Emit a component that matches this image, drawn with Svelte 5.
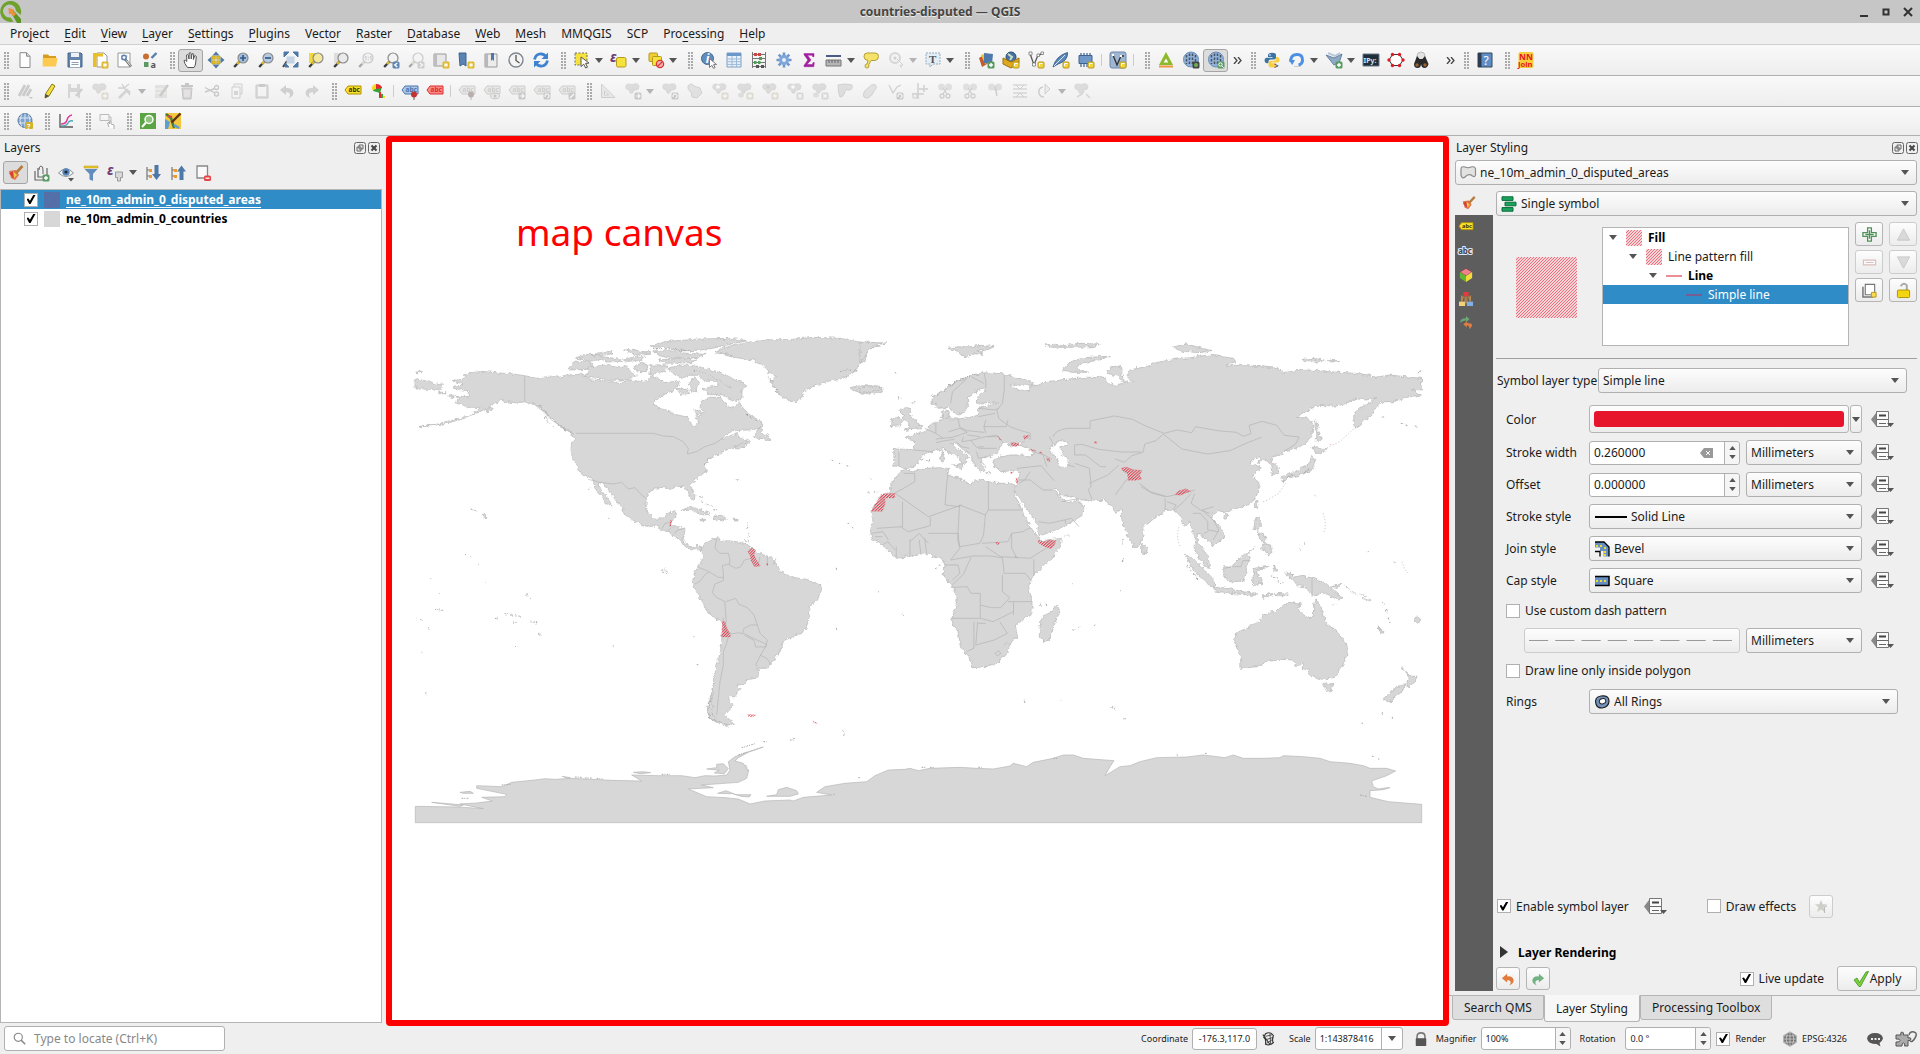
<script>
  // ---- icon fragments, all on a 16 x 16 grid ----
  const lens = (fill, inner = '') =>
    `<path d="M6.5 9.5 1.2 15" stroke="#3a3a3a" stroke-width="2.4"/><path d="M6.2 9.6 4 12" stroke="#e5c02c" stroke-width="2"/><circle cx="10" cy="6" r="5" fill="${fill}" stroke="#8b8b8b" stroke-width="1.2"/>${inner}`;
  const badge = (fill, inner) => `<rect x="9.5" y="9.5" width="7" height="7" rx="1.5" fill="${fill}"/>${inner}`;
  const plusB = badge('#5b9a62', '<path d="M13 11v4M11 13h4" stroke="#fff" stroke-width="1.4"/>');
  const starB = badge('#dcb628', '<path d="M13 10.6v4.8M10.8 11.8l4.4 2.4M15.2 11.8l-4.4 2.4" stroke="#fff"/>');
  const xB = badge('#b9a9a9', '<path d="m11.3 11.3 3.4 3.4m0-3.4-3.4 3.4" stroke="#fff" stroke-width="1.3"/>');
  const arrB = badge('#8d8d8d', '<path d="M10.8 13h4M13 11l2 2-2 2" stroke="#fff" stroke-width="1.2" fill="none"/>');
  const rotB = badge('#8d8d8d', '<path d="M11.3 14a2 2 0 1 1 2 1" stroke="#fff" stroke-width="1.2" fill="none"/>');
  const yelB = '<rect x="10" y="10" width="6" height="6" rx="1" fill="#f0d53c" stroke="#b8941c"/><path d="M11.5 14v-2.500h3" stroke="#fff" fill="none"/>';
  const leftB = badge('#5d86b4', '<path d="m14.300 11-2.500 2 2.500 2" stroke="#fff" stroke-width="1.400" fill="none"/>');
  const blob = '<path d="M.7 3.500Q1 .6 4 1q3 1 5 0 4.500-1 5 2.500 0 3.500-3.500 3.500-2.500 0-2.500 2.500-1 1.500-3 .3 0-3.300-2.500-3.300Q.7 6 .7 3.500z" fill="#b8b9b2" stroke="#9c9c98" stroke-width=".7"/>';
  const tag = (fill, stroke) =>
    `<path d="M0 7 3 3h13v8H3z" fill="${fill}" stroke="${stroke}"/><text x="3.500" y="9.300" font-size="6.500" font-weight="700" fill="${stroke === '#b19000' ? '#3d3300' : stroke}">abc</text>`;
  const pin = '<circle cx="12" cy="11.500" r="3" fill="#c43131"/><path d="M12 14v3" stroke="#5c5c5c"/>';
  const globe = '<circle cx="8" cy="7.500" r="7" fill="#7ea3cf" stroke="#56779f"/><path d="M1.500 5h13M1.500 10h13M8 .5v14M4.500 1.500q-3 6 0 12M11.500 1.500q3 6 0 12" stroke="#dfe8f2" fill="none"/>';
  const globeDark = '<circle cx="8" cy="7.500" r="7.500" fill="#8eb1da" stroke="#6a8fb8"/><path d="M3.500 3v9M6.500 1.500v12M9.500 1.500v12M12.500 3v9" stroke="#4b525c" stroke-width="1.500" stroke-dasharray="2.500 1.500"/>';
  const brush = '<path d="m1 6 7-1 3 5-4 5-4-2z" fill="#e3734a"/><path d="m1 8 5-2 2 4-3 3z" fill="#d63f3f"/><path d="m5 6 4 4-3 3z" fill="#f0cd3c"/><path d="m8 8 6.500-7" stroke="#b8793b" stroke-width="2.600"/>';
  const tree = '<path d="M2 2v13M2 5h5M2 11h5" stroke="#777" stroke-width="1.200" fill="none"/><path d="M4 4h3v3H4zM4 10h3v3H4z" fill="#eb9b32"/>';
  const scissors = '<circle cx="5" cy="13" r="2" fill="none" stroke="#999" stroke-width="1.300"/><circle cx="11" cy="13" r="2" fill="none" stroke="#999" stroke-width="1.300"/><path d="m6 11 4-6M10 11 6 5" stroke="#999" stroke-width="1.300"/>';
  const blobs = '<ellipse cx="4.500" cy="4" rx="3.500" ry="3.500" fill="#bfc0ba"/><ellipse cx="11.500" cy="4" rx="3.500" ry="3.500" fill="#bfc0ba"/>';

  const icons = {
    new: '<path d="M3 .7h6.500L13 4.200v11.300H3z" fill="#fdfdfd" stroke="#8a8a8a"/><path d="M9.500.7v3.500H13" fill="#ddd" stroke="#8a8a8a"/>',
    open: '<path d="M1 2.500h5L7.500 4H14v10H1z" fill="#d99c22"/><path d="M.7 6h14.800L14 14.500H.7z" fill="#fbca4f"/>',
    save: '<path d="M1 1h13l1 1v13H1z" fill="#6284ad" stroke="#48668c"/><path d="M4 1h8v4H4z" fill="#eef2f6"/><path d="M3 8h10v7H3z" fill="#fff"/><path d="M4.500 10.500h7M4.500 12.500h7" stroke="#8ca1b8"/>',
    layout: '<path d="M5 1h7l3 3v11H5z" fill="#fff" stroke="#999"/><path d="M1 1h3.500v14H1z" fill="#e9bf25"/><path d="M2 1.500h9v3H2z" fill="#e9bf25"/>' + starB,
    manager: '<path d="M1 1h12v14H1z" fill="#fff" stroke="#999"/><path d="M4 4h7M4 7h3" stroke="#ccc"/><path d="m8 7 6 7.500" stroke="#777" stroke-width="2.600"/><path d="m9.500 8.500 4 5" stroke="#f1f1f1"/><circle cx="7" cy="5.500" r="2.200" fill="none" stroke="#5d82b2" stroke-width="1.500"/>',
    style: '<circle cx="4" cy="4.500" r="3" fill="#c96d33"/><path d="M2 10h4.500v5H2z" fill="#5b9a62"/><path d="M9.500 6 14.500 1" stroke="#567fae" stroke-width="2.400"/><text x="8.500" y="15.500" font-size="9" font-weight="700" fill="#555">a</text>',
    hand: '<path d="M4.500 15.500Q1 11 1 8.500q1.500-1 2.800 1L3.600 3q1-1 1.700.2L6 7l.2-6q1.200-.8 1.800.3L8.200 7l.8-5.200q1.200-.7 1.700.4L10.400 7.500l1.300-3.700q1.200-.4 1.600.7L12.500 12q-.3 2-1.500 3.500z" fill="#fff" stroke="#555"/>',
    panto: '<path d="M8-.5l3.500 4h-7zM8 16.500l3.500-4h-7zM-.5 8l4-3.500v7zM16.500 8l-4-3.500v7z" fill="#4e78a8"/><path d="M4 4h3.300v3.300H4zM8.700 4H12v3.300H8.700zM4 8.700h3.300V12H4zM8.700 8.700H12V12H8.700z" fill="#e3c22b" stroke="#b1931a" stroke-width=".6"/>',
    zoomin: lens('#a9c0da', '<path d="M10 3v6M7 6h6" stroke="#315b8c" stroke-width="1.700"/>'),
    zoomout: lens('#b7cbe0', '<path d="M7 6h6" stroke="#315b8c" stroke-width="1.700"/>'),
    zoomfull: '<path d="M4 9 0 15" stroke="#444" stroke-width="2"/><path d="M3.500 4.500h8v7h-8z" fill="#c3d3e5"/><path d="M1 0h5L1 5zM15 0h-5l5 5zM2 15h4l-4-4zM15 15h-5l5-5z" fill="#4e78a8" stroke="#4e78a8"/>',
    zoomsel: '<path d="M1 1h6v10H1z" fill="#f1d83b"/>' + lens('#f3e79b'),
    zoomlayer: '<path d="M1 1h6v10H1z" fill="#ddd"/>' + lens('#eaeaea'),
    zoom11: lens('#eee', '<text x="6" y="8" font-size="6" font-weight="700" fill="#888">1:1</text>'),
    zoomlast: lens('#f3f3f3') + leftB,
    zoomnext: lens('#f3f3f3') + badge('#999', '<path d="m12 11 2.500 2-2.500 2" stroke="#fff" stroke-width="1.400" fill="none"/>'),
    mapview: '<path d="M1 2h12v12H1z" fill="#e8e8e8" stroke="#999"/><path d="M1 2h3v12H1z" fill="#bdbdbd"/>' + starB,
    book1: '<path d="M1 1h7v13l-3-2-3 2z" fill="#5b83b3" stroke="#40648f"/>' + starB,
    book2: '<path d="M2 2h12v13H2z" fill="#ececec" stroke="#999"/><path d="M2 2h3v13H2z" fill="#b8b8b8"/><path d="M8 1h3v8L9.500 7.500 8 9z" fill="#4e78a8"/>',
    clock: '<circle cx="8" cy="8" r="7" fill="#f4f4f4" stroke="#7d8690" stroke-width="1.400"/><path d="M8 3v5.500l3.500 2.500" stroke="#555" stroke-width="1.300" fill="none"/>',
    refresh: '<path d="M1.500 7.500Q3 1.500 8.500 2q2.500.2 4 2M14.500 8.500Q13 14.500 7.500 14q-2.500-.2-4-2" stroke="#3f82cf" stroke-width="2.800" fill="none"/><path d="M15 .5V7H8.500zM1 15.500V9h6.500z" fill="#3f82cf"/>',
    select: '<path d="M1 1h12v12H1z" fill="#f6e23f" stroke="#6b6b6b" stroke-dasharray="2 1.500"/><path d="m7 5 8 6-3.500.4 2 3.800-1.800.8-2-3.800L7 14.500z" fill="#fff" stroke="#555"/>',
    epsSel: '<text x="-1" y="9.500" font-size="14" font-weight="700" font-style="italic" fill="#6b3b70">ε</text><rect x="5.500" y="5.500" width="9.500" height="9.500" rx="1.500" fill="#f6e23f" stroke="#b59b1c"/>',
    desel: '<rect x="1" y="1" width="8.500" height="8.500" rx="1" fill="#f2cf39" stroke="#b59b1c"/><rect x="4.500" y="4.500" width="9" height="9" rx="1" fill="#f6e23f" stroke="#b59b1c"/><circle cx="12" cy="12" r="3.600" fill="#f4b1b1" stroke="#d63535" stroke-width="1.300"/><path d="m9.600 14.400 4.800-4.800" stroke="#d63535" stroke-width="1.300"/>',
    identify: '<circle cx="6.500" cy="6.500" r="6" fill="#628cbd" stroke="#45698f"/><text x="4.700" y="11" font-size="12" font-weight="700" font-style="italic" fill="#fff">i</text><path d="m8.500 6.500 7 6-3 .2 1.600 2.900-1.600.8-1.600-3-2.400 2z" fill="#fff" stroke="#777"/>',
    table: '<path d="M1 1h14v14H1z" fill="#eaf1f8" stroke="#7da0c4"/><path d="M1 1h14v3H1z" fill="#6b98c8"/><path d="M1 7h14M1 9.700h14M1 12.400h14M6 4v11M10.500 4v11" stroke="#9bb9d8"/>',
    abacus: '<path d="M1.500 0v16M14.500 0v16M1 2.500h14M1 6.500h14M1 10.500h14M1 14.500h14" stroke="#777"/><path d="M3 1h3v3H3zM7 1h3v3H7z" fill="#c64545"/><path d="M8 5h3v3H8z" fill="#4c9d55"/><path d="M3 9h2.500v3H3zM7 9h2.500v3H7z" fill="#4c9d55"/><path d="M5 13h3v3H5zM10 13h3v3h-3z" fill="#555"/>',
    gear: '<path d="M8 .5v15M.5 8h15M2.700 2.700l10.600 10.600M13.300 2.700 2.700 13.300" stroke="#6c96cc" stroke-width="2.600"/><circle cx="8" cy="8" r="5" fill="#7ea6da"/><circle cx="8" cy="8" r="2" fill="#e7eef8"/>',
    sigma: '<path d="M3 1.500h10v3.200h-1.300L11 3.200H6.500L10 8l-4 4.500h5.300l.8-2H13.300l-.5 4.200H3v-1.200L6.800 8 3 2.700z" fill="#a0209f" stroke="#a0209f" stroke-width=".5"/>',
    measure: '<path d="M0 4h15" stroke="#4a5a80" stroke-width="2"/><path d="M0 8h15v6H0z" fill="#b5b5b5" stroke="#777"/><path d="M3 8v3M6 8v3M9 8v3M12 8v3" stroke="#666"/>',
    tip: '<path d="M4 1h8q3.500 0 3.500 3.500T12 8.500H8L5.500 13l.5 1q0 2-2 2t-2-2 2-2l1-3.500Q1 8 1 4.500T4 1z" fill="#f4e26b" stroke="#b39f34"/>',
    action: '<circle cx="7" cy="6" r="5" fill="#eee" stroke="#aaa" stroke-width="2"/><circle cx="7" cy="6" r="1.500" fill="#999"/><path d="m9 7 6 6-3 .3 1.500 2.500" fill="#fff" stroke="#999"/>',
    textann: '<path d="M1 1h14v11H8l-3 3v-3H1z" fill="#e3edf6" stroke="#9ab" stroke-dasharray="2 1"/><text x="4" y="10.500" font-size="11" font-weight="700" fill="#555" font-family="Liberation Serif">T</text>',
    dsm: '<path d="m1 6 5-3 3 9-5 3z" fill="#c3592c"/><path d="m3 3 6-2 3 8-5 3z" fill="#edc42c"/><path d="m6 1 9 1-1 10-8-1z" fill="#4f79ac"/>' + plusB,
    geopkg: '<circle cx="8" cy="5" r="5" fill="#4573a7" stroke="#2b4b70"/><path d="M5 2l4 3-2 3" stroke="#cfe0c2" stroke-width="2" fill="none"/><path d="m0 6 8 4 8-4v5l-8 5-8-4z" fill="#e0a91c" stroke="#9a720d"/>' + yelB,
    shp: '<path d="M2 1.500 6 13 10 3l4-1" stroke="#555" fill="none" stroke-width="1.300"/><path d="M1 0h3v3H1zM4.500 11h3v3h-3zM9 2h2.500v2.500H9zM13 0h2.500v2.500H13z" fill="#fff" stroke="#777" stroke-width=".8"/>' + yelB,
    spatialite: '<path d="M0 15Q3 4 14.500.5 15 9 5 12z" fill="#5d88ba" stroke="#3d6290"/><path d="M1 14 12 3" stroke="#dbe6f2"/>' + yelB,
    memory: '<path d="M3 1v14M6 1v14M9 1v14M12 1v14" stroke="#3d6290" stroke-width="1.200"/><path d="M1 3.500h13v8H1z" fill="#6f98c8" stroke="#3d6290"/>' + yelB,
    virtual: '<rect x="0" y="0" width="16" height="16" rx="2" fill="#9fb6d2" stroke="#6c88aa"/><path d="M3 3l4 10 4-9h3" stroke="#333" stroke-width="1.300" fill="none"/><path d="M2 2h2v2H2zM10 3h2v2h-2z" fill="#fff"/>' + yelB,
    grass: '<path d="M8 0 1 13h14z" fill="#8bb92a"/><path d="m8 6.500-2.300 4h4.600z" fill="#fff"/><path d="M1 14.500h14" stroke="#ef9542" stroke-width="2"/>',
    globeA: globeDark + badge('#444', '<circle cx="13" cy="13" r="2" fill="#6fae55"/>'),
    globeB: globeDark + badge('#5b9a62', '<circle cx="12.500" cy="12.500" r="1.700" fill="none" stroke="#fff"/><path d="m13.700 13.700 2 2" stroke="#fff"/>'),
    python: '<path d="M8 .7q-4 0-4 2.500V5h4.500v.8H2.500Q.5 6 .5 8.500T3 11.300h1.500V9.500q0-2 2-2h3.500q2 0 2-2V3Q12 .7 8 .7z" fill="#3b73a5"/><path d="M8 15.500q4 0 4-2.500v-1.800H7.500v-.7h6q2 0 2-2.800T13.500 5H12v1.800q0 2-2 2H6.500q-2 0-2 2V13q0 2.500 3.500 2.500z" fill="#f7cf45"/><circle cx="6" cy="3" r=".8" fill="#fff"/><text x="10" y="17" font-size="8" font-weight="700" fill="#555">&gt;</text>',
    reload: '<path d="M2 10Q1 3 7.500 2.500T13.500 9q-.7 3.500-4 4" stroke="#4d8fe3" stroke-width="3" fill="none"/><path d="M0 8h6l-2.800 5z" fill="#4d8fe3"/><path d="M5 14.500h7" stroke="#ccc"/>',
    vecplus: '<path d="m0 3 8 3 8-4-3 9-5 2z" fill="#8ea9c4" stroke="#67829d"/><path d="m2 1 7 3 5-3" stroke="#b9c9da" stroke-width="2" fill="none"/>' + plusB,
    ipy: '<path d="M0 2h16v12H0z" fill="#1d2d3a" stroke="#6b7680"/><text x=".5" y="10.500" font-size="7" font-weight="700" fill="#d6e6ee">IPy:</text>',
    hex: '<path d="M4.500 2.500h7l3.500 5.500-3.500 5.500h-7L1 8z" fill="#fff" stroke="#333"/><circle cx="4.500" cy="2.500" r="1.700" fill="#e01b24"/><circle cx="11.500" cy="2.500" r="1.700" fill="#e01b24"/><circle cx="15" cy="8" r="1.700" fill="#e01b24"/><circle cx="1" cy="8" r="1.700" fill="#e01b24"/><circle cx="4.500" cy="13.500" r="1.700" fill="#e01b24"/><circle cx="11.500" cy="13.500" r="1.700" fill="#e01b24"/>',
    binoc: '<circle cx="8" cy="4" r="4" fill="#e3e3e3" stroke="#bbb"/><path d="M4 4 1 12q0 4 3.500 4T8 12q.5 4 3.500 4t4-4L12 4 9.500 7h-3z" fill="#2a2a2a"/><circle cx="4" cy="13" r="1.700" fill="#9a6230"/><circle cx="12" cy="13" r="1.700" fill="#9a6230"/>',
    help: '<path d="M1 1h14v14H1z" fill="#5f8ec6" stroke="#34465c"/><path d="M1 1h3.500v14H1z" fill="#2e3c50"/><text x="6.500" y="12.500" font-size="12" fill="#fff">?</text>',
    nn: '<rect x=".5" y="0" width="15" height="16" rx="2" fill="#f6cd3c"/><text x="1" y="7.500" font-size="8.500" font-weight="700" fill="#e8141c">NN</text><text x="0" y="14.500" font-size="7.500" font-weight="700" fill="#e8141c">Join</text>',
    pencils: '<path d="M2 13 8 2M6 13l6-11M10 13l4-7" stroke="#9b9089" stroke-width="2.800"/><path d="M12 14h4l-2 2z" fill="#888"/>',
    pencil: '<path d="m3 15 .5-4L10 1l3 2L7 13z" fill="#f4df3e" stroke="#8a7b20"/><path d="m3 15 .5-4L7 13z" fill="#4a4a4a"/>',
    saveedit: '<path d="M1 1h12v14H1z" fill="#a9a9a9"/><path d="M4 1h6v4H4zM3 9h8v6H3z" fill="#f0f0f0"/><path d="m9 13 6-7" stroke="#999" stroke-width="2.500"/>',
    addpoly: blob + starB,
    vertex: '<path d="M1 5h6l5-4M5 1l3 5 5 6" stroke="#999" fill="none" stroke-width="1.300"/><path d="m2 15 8-8 3 3" stroke="#a5a5a5" stroke-width="2.600" fill="none"/>',
    multiedit: '<path d="M1 2h12v13H1z" fill="#c9c9b5"/><path d="M1 6h12M1 10h12" stroke="#f2f2f2"/><path d="m6 13 8-11" stroke="#8f8f8f" stroke-width="2.400"/>',
    trash: '<path d="M3 5h10l-1 11H4z" fill="#c0a4a4" stroke="#957b7b"/><path d="M2 3h12M6 1h4" stroke="#957b7b" stroke-width="2"/><path d="M6 7v7M8 7v7M10 7v7" stroke="#eee"/>',
    cut: '<circle cx="12.500" cy="4.500" r="2" fill="none" stroke="#888" stroke-width="1.300"/><circle cx="12.500" cy="11" r="2" fill="none" stroke="#888" stroke-width="1.300"/><path d="M11 10 1 4.500M11 5.500 1 9" stroke="#888" stroke-width="1.400"/>',
    copy: '<path d="M5 1h8v10H5z" fill="#eee" stroke="#999"/><path d="M3 4h8v11H3z" fill="#f7f7f7" stroke="#999"/><path d="M5 8h4v4H5z" fill="#aaa"/>',
    paste: '<path d="M2 2h12v13H2z" fill="#bbb" stroke="#8c8c8c"/><path d="M4 4h8v9H4z" fill="#f5f5f5"/><path d="M5 1h6v3H5z" fill="#8c8c8c"/>',
    undo: '<path d="M1 7 7 2v3q7-.5 7.500 5-.5 4-5 5 2-2 1.500-4Q10 9 7 9v3z" fill="#a39a94"/>',
    redo: '<path d="M15 7 9 2v3Q2 4.500 1.500 10q.5 4 5 5-2-2-1.500-4Q6 9 9 9v3z" fill="#98a39a"/>',
    labYellow: tag('#f9e12f', '#b19000'),
    diagram: '<path d="m6 1 6 3-2 6-7-2z" fill="#37a23b"/><path d="M6 1q5 0 6 4l-6 1z" fill="#e42b2b"/><path d="M6 1Q1 2 2 7l4-1z" fill="#f2da25"/><path d="M9 9h2v6H9z" fill="#e42b2b"/><path d="M11 11h2v4h-2z" fill="#37a23b"/><path d="M13 13h2v2h-2z" fill="#f2da25"/>',
    labPin: tag('#a9c8ec', '#4c74a6') + pin,
    labRed: tag('#fb8a8a', '#e02b2b'),
    labG1: tag('#d5d3c8', '#98968c') + pin,
    labG2: tag('#d5d3c8', '#98968c') + '<ellipse cx="11" cy="13" rx="4.500" ry="2.800" fill="#ddd" stroke="#888"/><circle cx="11" cy="13" r="1.500" fill="#888"/>',
    labG3: tag('#d5d3c8', '#98968c') + arrB,
    labG4: tag('#d5d3c8', '#98968c') + rotB,
    labG5: tag('#d5d3c8', '#98968c') + badge('#8d8d8d', '<path d="m11 15 4-4" stroke="#fff" stroke-width="1.500"/>'),
    cad: '<path d="M1.500 1v13.500H15z" fill="#ddd5cc" stroke="#999"/><path d="M4.500 8v4h4z" fill="#f7f7f7" stroke="#999"/>',
    move: blob + arrB, rotate: blob + rotB,
    simplify: '<path d="M1 3q3-4 6 0l6 2 2 5-5 5-5-1-1-5q-4-2-3-6z" fill="#c6c7c1" stroke="#9c9c98"/>',
    ring: blob + '<circle cx="6" cy="4" r="1.800" fill="#fff"/>' + starB,
    part: blob + '<ellipse cx="4" cy="12" rx="3" ry="2.500" fill="#bfc0ba"/>' + starB,
    fill: blob + '<circle cx="6" cy="4" r="1.800" fill="#999"/>' + starB,
    delring: blob + '<circle cx="6" cy="4" r="1.800" fill="#fff"/>' + xB,
    delpart: blob + '<ellipse cx="4" cy="12" rx="3" ry="2.500" fill="#bfc0ba"/>' + xB,
    reshape: '<path d="M1 2q7-2 14 0 1 5-3 5-3-1-4 1-1 6-5 6-2-5-2-12z" fill="#bdbeb8" stroke="#999"/>',
    offset: '<path d="M2 14q-2-5 4-9 3-4 7-3.500 3 3-1 6.500-2 5-6 7-3 0-4-1z" fill="#c7c8c2" stroke="#999"/>',
    vtx2: '<path d="m2 2 4 8 4-6 4-2" stroke="#999" fill="none" stroke-width="1.300"/>' + rotB,
    trim: '<path d="M6 0v16M0 11h12M12 2v7M7 6h9" stroke="#999" stroke-width="1.500"/><path d="M1 11h4v4H1z" fill="#eee" stroke="#999"/>',
    split: blobs + scissors,
    merge: blobs + '<path d="m8 3 2 10M10 8l-3-2" stroke="#999" stroke-width="1.500"/>',
    align: '<path d="M1 2h14M1 6h14M1 10h14M1 14h14" stroke="#aaa" stroke-width="1.300"/><path d="m4 2 4 4 4-4M4 14l4-4 4 4" stroke="#999" fill="none"/>',
    rotpt: '<path d="M8 1v10l5-5z" fill="#ddd" stroke="#999"/><path d="M6 4Q1 5 2 10q1 4 5 4" stroke="#999" stroke-width="1.500" fill="none"/>',
    offpt: blob + '<path d="m3 14 5-3 2-3M12 11l4 4" stroke="#aaa" stroke-width="1.500" fill="none"/>',
    qms: globe + '<rect x="8" y="9" width="8" height="7" rx="1" fill="#d2b22d"/><text x="10" y="15.500" font-size="7" font-weight="700" fill="#fff">?</text>',
    profile: '<path d="M2 1v13h13" stroke="#555" fill="none" stroke-width="1.300"/><path d="M3 11q5 0 6-4t5-5" stroke="#e23c9a" stroke-width="1.500" fill="none"/><path d="M3 13q6 0 7-3t5-2" stroke="#4aa9b8" stroke-width="1.300" fill="none"/>',
    rectsel: '<path d="M1 1.500h9v6H1zM10 4h2v4" fill="none" stroke="#bbb"/><path d="m10 14-1.500-4 1-.5 1 1.500V8H12v3l3 1v4" fill="#fff" stroke="#aaa"/>',
    greensearch: '<path d="M0 0h16v16H0z" fill="#5aa444"/><circle cx="9" cy="6.500" r="4" fill="#8cc479" stroke="#fff" stroke-width="1.500"/><path d="m6 9.500-4 4.500" stroke="#fff" stroke-width="2"/>',
    osm: '<path d="M0 0h16v16H0z" fill="#f2c63d"/><path d="m0 6 5 3-2 7H0z" fill="#5d9ed2"/><path d="M1 1l5 4 3 10" stroke="#487f3a" stroke-width="2.500" fill="none"/><path d="m15.500.5-9 9" stroke="#5d3314" stroke-width="2.400"/><path d="m9 12 5 3" stroke="#5d9ed2" stroke-width="2.500"/><path d="m3 3 4 1" stroke="#d14545" stroke-width="2"/>',
    brush,
    addgroup: '<path d="M2 6v9h9M5 3v9h9V3" fill="none" stroke="#666" stroke-width="1.200"/><path d="M6 5q0-4 2-4t2 4v4" fill="none" stroke="#666"/>' + plusB,
    eye: '<path d="M.5 8Q8-.5 15.500 8 8 15 .5 8z" fill="#f2f4f6" stroke="#8a949e"/><circle cx="8" cy="7" r="3.700" fill="#5c86b7"/><circle cx="8" cy="7" r="1.600" fill="#1d2c3d"/><path d="M10 13h6l-3 3.500z" fill="#555"/>',
    filter: '<path d="M1 1h14v2H1z" fill="#ecc92d" stroke="#b7971b" stroke-width=".5"/><path d="M1.500 4h13L10 9v7l-3.500-1.500V9z" fill="#628cbd"/>',
    epsFil: '<text x="-1" y="10" font-size="14" font-weight="700" font-style="italic" fill="#6b3b70">ε</text><path d="M7.500 7h7v5.500h-2V16h-3v-3.500h-2z" fill="#d9d9d9" stroke="#999"/>',
    expand: tree + '<path d="M9.500 0h4v9H16l-4.500 6L7 9h2.500z" fill="#4e78a8"/>',
    collapse: tree + '<path d="M9.500 15h4V6.500H16L11.500.5 7 6.500h2.500z" fill="#4e78a8"/>',
    remove: '<path d="M2 1h10.500v12H2z" fill="#fafafa" stroke="#888" stroke-width="1.300"/><rect x="9" y="10.500" width="7" height="5.500" rx="1.500" fill="#e54545"/><path d="M10.500 13.200h4" stroke="#fff" stroke-width="1.300"/>',
    poly: '<path d="M1 4q0-3 4-2 3 1.500 6 0 4-1 4.500 2v6q-.5 2.500-3 1-4-3-7.500 1Q2 14.500 1 10z" fill="#e2e2e0" stroke="#8a8a8a" stroke-width="1.200"/>',
    single: '<path d="M1 .8h11v3.600H1zM4 6.200h11v3.600H4zM1 11.600h11v3.600H1z" fill="#19a45c" stroke="#0a6b39"/>',
    abcMask: '<text x="-1" y="11" font-size="9" font-weight="700" fill="#444" stroke="#dfe6ff" stroke-width="2.500" paint-order="stroke">abc</text>',
    cube: '<path d="m8 .5 7 4-7 4.500-7-4.500z" fill="#f1828a" stroke="#7b3035" stroke-width=".6"/><path d="m1 4.500 7 4.500v7l-7-4.500z" fill="#5eb832"/><path d="m15 4.500-7 4.500v7l7-4.500z" fill="#f3dc38"/>',
    joins: '<path d="M5 0h6v5H5z" fill="#e03c3c"/><path d="M3 4v7M5 5 3 11M11 5l2 6M13 4v7M7 5v8M9 5v8" stroke="#b8874c" stroke-width="1.500"/><path d="M0 11h7v5H0z" fill="#f1d27a"/><path d="M9 11h7v5H9z" fill="#82aee6"/>',
    history: '<path d="m8 0 4 3.500L8 7V5Q3 5 1.500 8 .5 2.500 8 2.500z" fill="#6aa877"/><path d="m9 6-4 3.500L9 13v-2.500q3 0 3 4.500 7-7-3-7z" fill="#df7d42"/>',
    green: '<path d="M6 1h4v5h5v4h-5v5H6v-5H1V6h5z" fill="#fff" stroke="#4d9157" stroke-width="1.400"/><path d="M8 3.500v9M3.500 8h9" stroke="#4d9157" stroke-width="1.500"/>',
    minus: '<path d="M1.500 5.500h13v5h-13z" fill="#fff" stroke="#c99" stroke-width="1.200"/><path d="M4 8h8" stroke="#c99"/>',
    up: '<path d="m8 2 6.500 12h-13z" fill="#c9c9c9" stroke="#aaa"/>',
    down: '<path d="m8 14 6.500-12h-13z" fill="#c9c9c9" stroke="#aaa"/>',
    dup: '<path d="M1 4v11h11" fill="none" stroke="#777" stroke-width="1.600"/><path d="M3.500 1.500h10v11h-10z" fill="#fff" stroke="#777" stroke-width="1.200"/><path d="M10 10h5v5h-5z" fill="#f6dd4f" stroke="#b8941c"/>',
    unlock: '<path d="M5 3.500Q8-1.500 11.500 2.500v5" fill="none" stroke="#aaa" stroke-width="2.200"/><rect x="1.500" y="7.500" width="13" height="8" rx="1" fill="#f3d511" stroke="#a89206"/>',
    undoC: '<path d="M1 7 7 2v3q7-.5 7.500 5-.5 4-5 5 2-2 1.500-4Q10 9 7 9v3z" fill="#e07b3d"/>',
    redoC: '<path d="M15 7 9 2v3Q2 4.500 1.500 10q.5 4 5 5-2-2-1.500-4Q6 9 9 9v3z" fill="#74b183"/>',
    check: '<path d="m1 9 3-2 2.500 4.500L13 1l2.500-.5L7.500 15.500H6z" fill="#7ed03a" stroke="#3f9124" stroke-width=".8"/>',
    star: '<path d="m8 1 2 5h5l-4 3.500 1.500 5.500L8 12l-4.500 3L5 9.500 1 6h5z" fill="#cfcfca"/><path d="M12 16V9l3-1" stroke="#b5b5b5" fill="none"/>',
    bevel: '<path d="M1 1h9l5 5v9.500H9.500V10H6V6.500H1z" fill="#668fc4"/><path d="M1 1h9l5 5v9.500M6 15.500V10.500H1" fill="none" stroke="#000" stroke-width="1.300"/><path d="M2 4h2v2H2zM6 4h2v2H6zM10 6h2v2h-2zM10 10h2v2h-2zM10 13h2v2h-2z" fill="#f0dc2c"/>',
    square: '<path d="M1 3.500h14v9H1" fill="#668fc4" stroke="#000" stroke-width="1.500"/><path d="M2 7h2v2H2zM6 7h2v2H6zM10 7h2v2h-2z" fill="#f0dc2c"/>',
    rings: '<path d="M2 10Q0 3 7 2q8-1 8 5 0 6-7 7-5 0-6-4z" fill="#7393bb" stroke="#222" stroke-width="1.200"/><ellipse cx="8.700" cy="7.500" rx="3.300" ry="2.600" fill="#fff" stroke="#222" transform="rotate(-15 8 8)"/>',
    search: '<circle cx="6.500" cy="6.500" r="5" fill="none" stroke="#888" stroke-width="1.400"/><path d="m10 10 5 5" stroke="#888" stroke-width="1.800"/>',
    extents: '<path d="m1 3 8 11M4 2q5-3 9 2-2 6 0 8-4 4-9 2 1-6-2-8z" fill="none" stroke="#333" stroke-width="1.300"/><path d="m4 5 8-2M4 9l9-3M5 13l8-5M9 2l1 12" stroke="#444"/>',
    lock: '<path d="M3.500 8V5q0-4 4.500-4t4.500 4v3" fill="none" stroke="#777" stroke-width="1.800"/><rect x="2" y="7" width="12" height="9" rx="1" fill="#555"/>',
    crs: '<path d="m8-1 8 5v8l-8 5-8-5V4z" fill="#b5b5b5"/><circle cx="8" cy="8" r="7" fill="#707070"/><path d="M1 8h14M2.500 4.500h11M2.500 11.500h11M8 1v14M5 2q-3 6 0 12M11 2q3 6 0 12" stroke="#dcdcdc" fill="none" stroke-width=".8"/>',
    bubble: '<path d="M0 7.500Q1 2 8 2t8 5.500q-1 3-3.500 4.500l1 3.500-4-2.500Q1 13 0 7.500z" fill="#555"/><path d="M4 7h2v2H4zM7.500 7h2v2h-2zM11 7h2v2h-2z" fill="#eee"/>',
    puzzle: '<path d="M-2 4h5q-1-3 1-3t1.500 3H10v3q3-1 3 1t-3 1.500V15H6.500q1-3-1-3T4 15h-6v-4q4 .5 4-1.500T-2 8z" fill="#aaa" stroke="#555"/><path d="M11 4q1-4 5-3t1 6-5 3" fill="none" stroke="#666" stroke-width="1.500"/>'
  };

  // Toolbar notation: "|" handle, ":" separator, ">>" overflow, "-" spacer,
  // "~name" disabled, "*name" pressed, "name+" button with a menu arrow.
  const toolbars = [
    '| new open save layout manager style | *hand panto zoomin zoomout zoomfull zoomsel zoomlayer ~zoom11 zoomlast ~zoomnext mapview book1 book2 clock refresh | select+ epsSel+ desel+ | identify table abacus gear sigma measure+ tip ~action+ textann+ | dsm geopkg shp spatialite memory : virtual : | grass globeA *globeB >> | python reload+ vecplus+ ipy hex binoc - >> | help | nn',
    '| ~pencils pencil ~saveedit ~addpoly ~vertex+ ~multiedit ~trash ~cut ~copy ~paste ~undo ~redo | labYellow diagram : labPin labRed : ~labG1 ~labG2 ~labG3 ~labG4 ~labG5 | ~cad ~move+ ~rotate ~simplify ~ring ~part ~fill ~delring ~delpart ~reshape ~offset ~vtx2 ~trim ~split ~split ~merge ~align ~rotpt+ ~offpt',
    '| qms | profile | rectsel | greensearch osm'
  ].map((row) => row.split(' ').map(parse));

  function parse(token) {
    if (token === '|') return { kind: 'grip' };
    if (token === ':') return { kind: 'sep' };
    if (token === '>>') return { kind: 'more' };
    if (token === '-') return { kind: 'space' };
    return {
      kind: 'btn',
      off: token.startsWith('~'),
      on: token.startsWith('*'),
      menu: token.endsWith('+'),
      name: token.replace(/[~*+]/g, '')
    };
  }

  const layerTools = '*brush addgroup eye filter epsFil+ expand collapse remove'.split(' ').map(parse);

  // Menu titles with the index of the underlined letter.
  const menus = [
    ['Project', 3], ['Edit', 0], ['View', 0], ['Layer', 0], ['Settings', 0], ['Plugins', 0], ['Vector', 4],
    ['Raster', 0], ['Database', 0], ['Web', 0], ['Mesh', 0], ['MMQGIS', -1], ['SCP', -1], ['Processing', 3], ['Help', 0]
  ].map(([t, i]) => (i < 0 ? [t, '', ''] : [t.slice(0, i), t[i], t.slice(i + 1)]));

  let layers = $state([
    { name: 'ne_10m_admin_0_disputed_areas', on: true, selected: true },
    { name: 'ne_10m_admin_0_countries', on: true, selected: false }
  ]);

  const symbolTree = [
    { name: 'Fill', depth: 0, swatch: 'hatch', bold: true },
    { name: 'Line pattern fill', depth: 1, swatch: 'hatch' },
    { name: 'Line', depth: 2, swatch: 'dash', bold: true },
    { name: 'Simple line', depth: 3, swatch: 'dash', selected: true }
  ];

  const sideTabs = ['labYellow', 'abcMask', 'cube', 'joins', 'history'];
  const dockTabs = ['Search QMS', 'Layer Styling', 'Processing Toolbox'];

  // ---- map geometry ----
  const west = [
    // North and Central America
    'M160 182 185 178 200 170 190 165 215 158 245 154 300 159 340 162 374 167 410 175 450 168 480 172 500 163 515 168 545 160 560 172 572 180 600 180 640 185 655 190 690 180 720 184 742 182 760 168 775 178 790 188 810 186 838 182 835 198 820 210 805 218 780 230 765 240 762 252 775 265 800 270 830 285 862 290 870 305 880 318 890 318 892 300 885 292 905 288 912 275 900 262 905 240 930 232 960 232 975 250 990 262 1008 258 1015 245 1030 265 1050 285 1080 300 1090 318 1080 325 1050 330 1000 332 975 345 960 358 990 348 1015 340 1020 355 1045 362 1030 375 1000 382 980 388 965 400 940 408 920 425 915 440 922 455 905 462 885 480 873 490 875 505 885 525 882 543 872 532 862 512 850 500 825 498 815 506 800 502 770 504 750 515 740 530 738 555 745 580 765 597 790 596 802 580 828 572 825 590 815 605 810 620 835 620 855 628 852 650 845 660 860 672 880 683 895 676 908 685 905 695 890 685 875 690 850 675 838 660 820 645 800 635 785 628 770 618 745 620 715 610 690 595 672 582 668 565 650 545 630 515 610 490 595 488 600 505 615 525 630 545 635 558 620 550 600 525 585 505 580 480 565 470 548 466 530 435 518 415 513 390 515 365 528 355 515 345 500 330 480 320 462 300 445 285 425 265 400 252 375 246 345 248 315 245 300 240 285 250 265 262 240 275 215 285 195 292 230 275 240 262 215 262 190 256 165 248 180 235 165 228 205 230 205 215 190 210 160 205 162 198 190 195z',
    // South America
    'M905 688l3 22-3 15-10 15-10 15-8 30 3 15 15 25 15 25 10 25 25 18 20 12 5 15-5 40-3 30-7 30-7 30-8 20 2 25-7 25-10 30-3 25 8 20 25 13 30 10 20-6-15-12-15-15 10-15 18-15-13-10-5-15 20 0 15-25-10-10 25-2 5-13 25-5 15-13-10-17 30 0 15-15 25-35 10-30 25-15 30-10 15-20 8-30 2-30 25-25 10-25-7-15-38-17-40-6-40-17-5-15-20-28-30-10-15-2-15-17-15-11-30-7-25-3-20 3-8-14-22 8-20 10z',
    // Greenland, Iceland
    'M945 98l35-18 60-12 60-8 80-2 60-6 80 3 60 11 40 4 20 8-40 7-20 10 20 10-5 20-20 5-5 20-20 15-30 13-40 7-40 15-25 10-10 20-15 18-25-6-25-17-20-25-10-15 20-15-25-15-20-20-25-15-60-8z',
    'M1352 203l25-6 40 1 30 5 2 10-30 7-35 0-20-8z',
    // Arctic archipelago
    'M505 150l12-22 45-5 20 14-30 12z', 'M562 142l60-8 35 6 22-3 15 18 18 12-30 12-50 2-30-8-50-4 15-12z', 'M525 113l45-10 25 5 55 8 15 8-40 2-20-8-35 6z', 'M575 104l30-7 30-3 3 8-40 5z', 'M672 90l30-2 20 7 30-1-2 6-45 4z', 'M670 120l40-12 28 3-12 10-45 3z', 'M700 145l25-18 20 10-8 18-25 0z', 'M750 135l50 0-3 20-25 2-22 10z', 'M745 80l50-15 100-8 100-2 48 7-60 12-50 12-40 5-55 2-30-10z', 'M760 92l50 0 50 8 60 3-30 10-90 0-25-8z', 'M775 120l60-5 55 5-10 8-80 2z',
    'M803 145l40-10 40 2 40 10 40 12 40 20 38 15-15 15 0 25-20 10-40-20-40 0-20-18 50-10-15-15-30 0-15-15-30 0-15 8-25-8z', 'M830 205l30 3 12 12-30 3z', 'M868 190l15-20 15 18-10 30-15-5z', 'M880 270l18-2 8 12-15 8z',
    // Newfoundland, Nova Scotia, Cuba, Hispaniola
    'M1060 352l12-20 12-12 0 20 18 5 10 14-10 2-15-5z', 'M1000 385l22-14 30-6-20 14-20 8z', 'M845 572l25-12 30 8 32 15-25 2-30-14z', 'M942 588l22-2 18 10-22 6-20-4z', 'M898 598l16 0 2 4-15 1z', 'M1000 598l14 0 0 5-13 0z',
    // Chukotka strip, Aleutians, Pacific islets
    'M45 176l30 6 30 10 25 0-8 16-45 0-32-4z', 'M113 216l25 2 0 4-22-1z', 'M46 153l20 0 3 5-22 0z', 'M143 228l12-1 8 5-10 3z',
    'M55 320l30-5 35-3 25-9 25-5 30-10 5 3-40 13-35 8-35 5-30 3-10 2z', 'M258 270l12-9 10 5-15 12z', 'M245 583l10 0 3 8-8 3z'
  ];
  const westSpecks = [
    'M212 567l10 3M225 572l8 3M785 750l8 10 12 0-8-10z',
    'M1300 422l-8-3M1315 427l14 2M1340 435l6 8M1405 516l14 2M1428 518l8-3M1342 609l8 4M1356 620l5 6M1410 477l8 0',
    'M900 530l10 5M905 545l14 10M920 550l16 12M940 568l20 8M1040 605l4 25M1046 640l2 14M1036 662l10 2M436 290l8 15 14 12',
    'M285 895l15 2M310 882l12 3M330 885l20 3M340 905l10 3M355 888l12 8M108 868l20 3M380 822l14 18M60 900l8 4M85 925l4 6M46 890l3 8M390 905l20 4M415 940l8 6M75 1118l4 4M235 735l3 3M210 710l10 8M638 978l4 0M92 775v3M118 820v3M255 787v2M890 1034l5 0M1325 1230q12 12 4 20M1180 1255h6M1010 480h4M625 595h3M565 508h3M64 996h3M345 982h3M1308 925h3M1282 785h3M1308 745h3M880 950h3M195 704h3',
    'M942 1090l-6 20 0 20-10 20-2 25 8 20 20 8 20 8 18 4M932 1140l8 20-4 20 12 16M412 252l14 14 16 12 8 14M420 256l18 18 20 24 22 22 26 12 16 12',
    'M1105 170l12 16 8 20 14 20 16 12M1385 85l10 20-8 14M1320 155l20-6 28 4M960 98l30 6 14 6M880 150l40 12 40 22 40 24M760 85l50 2 60 6M915 435l6-14 18-8M1040 285l20 12 14 6'
  ];
  const westBorders = [
    'M374 167v79l30 8 25 20 25 25 45 30 15 10M528 340h232l30 8 30 2 30 15 15 20-3 17 28-7 25-15 30-10 30-20',
    'M565 478l35 9 40 5 25-5 20 20 20-4 20 22 13 10M785 628l10-18 12-2M800 635l12-10M822 640l12-10 22-5M845 660l10 0M905 685l-8-8',
    'M950 655l-5 30 15 15 25 0 5 20-2 15 20 10 15-5 10-20 20-5M895 742l30 12 30 18 15 0 0-15-3-20 20-5M885 792l15-8 15-20 12-8M970 772l0 10-25 10-8 25 12 15 25 12 5 60-7 20M977 845l30-10 10 18 25 10 20 22 10 30-20 0-20 10-5 17-10-4-20 3-15-4-8-20-5-25M1030 940l30 15 40 18-3 8-30 0-5-20-28-15M1072 915l8 25 22 20-5 20-15 25-15 30 5 5M1080 1005l20 10 15 20M985 950l-5 20-10 25 0 40-10 50-5 50-5 50M1075 735l5-25M1102 735l0-28M1120 735l8-20'
  ];
  const east = [
    // Eurasia
    'M90 387 130 388 148 390 146 362 122 352 145 345 175 335 185 322 205 305 225 298 222 280 240 272 245 290 240 296 265 297 300 292 320 285 320 265 345 258 372 250 345 248 318 250 317 230 345 205 330 204 315 212 290 232 292 250 285 275 265 285 250 275 240 262 212 265 195 250 195 230 230 210 260 185 300 165 345 158 390 162 420 172 465 185 468 195 430 196 400 190 425 210 460 212 462 198 485 195 495 186 530 182 560 178 610 172 660 172 672 190 690 196 710 188 700 170 668 160 675 145 692 138 708 145 708 165 716 188 735 182 722 166 730 150 780 138 800 128 850 118 900 112 945 105 1010 115 1015 125 990 135 1060 138 1130 145 1145 158 1180 152 1220 150 1270 155 1340 160 1375 165 1395 172 1430 165 1518 175 1518 210 1490 208 1515 225 1480 232 1440 245 1412 245 1395 262 1385 285 1370 298 1340 325 1335 300 1335 280 1355 262 1395 235 1370 240 1340 236 1310 252 1285 258 1235 256 1205 275 1182 292 1215 295 1225 315 1222 345 1205 370 1180 385 1150 392 1135 405 1112 412 1112 425 1130 440 1132 460 1115 465 1112 445 1105 425 1090 418 1075 428 1080 412 1062 420 1050 428 1065 435 1085 440 1070 455 1062 470 1080 490 1078 510 1065 540 1050 555 1020 565 985 577 970 572 955 582 950 595 965 612 982 635 983 655 952 680 948 665 930 655 920 640 912 642 912 665 930 690 942 715 945 745 930 738 915 708 903 685 905 650 898 630 893 605 880 618 870 610 868 590 850 570 825 572 800 590 780 610 765 620 765 650 752 682 740 682 720 635 708 600 706 570 690 577 682 560 662 542 630 540 592 540 578 528 545 528 530 502 522 505 540 530 560 548 580 545 585 535 608 565 602 585 570 608 540 625 486 648 482 635 480 615 460 580 440 550 430 530 418 520 416 512 425 490 430 460 425 450 405 452 385 455 365 440 360 420 378 412 405 405 440 405 462 412 470 402 462 390 440 378 430 376 445 364 430 366 425 378 405 378 395 365 380 378 372 400 352 410 340 412 328 415 330 430 340 442 330 454 318 445 305 425 305 408 285 395 265 375 252 368 250 375 268 392 298 412 288 412 284 432 276 428 268 412 240 398 228 385 205 392 195 395 178 402 158 420 155 432 145 442 120 447 110 440 90 438 92 405z',
    // Africa, Madagascar
    'M118 450l32 3 30-8 35-2 25 2-5 20 35 10 30 20 12-15 28 2 30 8 30 0 13 2 7 8-5 20 15 30 15 40 10 20 15 25 12 15 8 12 30-4 25-3-5 25-20 35-30 30-25 30-10 25 10 40 0 40-45 35 5 35-20 20-5 25-30 35-30 10-35 3-10-33-23-30-7-45-20-35 17-40 0-30-12-30-25-35 5-30-10-20-20-3-15-12-30 5-25 5-30 5-35-35-15-15-18-10-4-25 7-30-5-25 15-25 15-25 20-10 5-25 25-35z',
    'M532 852l8 23-15 40-13 45-17 5-10-20 5-55 30-15z',
    // Australia, Tasmania, New Zealand
    'M1015 940l40-20 25-20 10-15 20-10 15 0 20-20 15-8 30 5-5 18 30 25 10-5 2-30 5-22 18 32 10 40 25 20 25 35 8 25-6 30-17 30-10 22-35 6-30-8-10-20-15-5 5-15-20 10-10-20-30-2-40 7-25 15-45 5-2-35-16-45z',
    'M1252 1088l12 6 14-4-3 24-13 3z', 'M1464 1042l15 15 12 12 15 0-5 15-15 15-8 0 2-15 5-10z', 'M1474 1094l-8 20-25 22-8 10-20-8 20-20 25-20z',
    // British Isles, Nordic and Arctic islands
    'M105 272l20-12 15 8-8 15 15 12 8 15 15 8-10 8-40 5 15-14-15-15-3-15z', 'M82 320l3-22 20-8 10 12-6 15z', 'M0 203l20-6 30 4 5 8-25 8-30 3z', 'M220 278l12-8 8 4-2 20-14 2z',
    'M238 85l30-5 30 0 30-4 35 4-20 10-25 3 15 10-25-2-20 10-15-8-10-10z', 'M548 150l20-25 40-12 70-5-30 12-45 8-20 14 25 12 10 3-45 0z', 'M500 75l30-2 20 5 40-8 60 2-20 8-60 2-50 0z', 'M845 82l35-10 30 8 40 12-30 6-50-4z', 'M1195 118l30-3 30 5-20 6-30-1zM1262 120l35 2-5 4-30-1z', 'M0 66l70 3-30 8-20 14-5 20-15 20z', 'M1508 158l10-5v5z',
    // Mediterranean islands, Sri Lanka
    'M218 402l10 5 0 18-8 0z', 'M220 395l7-3-2 12z', 'M250 435l28-4-4 16z', 'M340 458l14 1-10 3z', 'M762 670l15 15-4 16-12-2z',
    // Japan, Sakhalin, Taiwan, Philippines
    'M1230 298l8 18 0 22 10 20-15 8 2-25-5-25z', 'M1222 382l18-2 18 10-8 10-20 0-5-8z', 'M1222 405l8 18-8 25-25 14-30 10-18 0-5 12-5-14 30-12 20-8 25-20z', 'M1070 542l8 4-6 20-6-8z', 'M1070 590l12 5 0 25-5 10-13-2z', 'M1090 670l20 5 4 25-10 5-10-18-12 4z', 'M1075 635l15 5 10 20-8 8-12-15z', 'M1045 705l22-25-20 22z', 'M980 588l12-8 5 8-8 10z',
    // Indonesia, New Guinea, Pacific
    'M877 703l18 6 40 45 22 25 2 20-12 0-40-40z', 'M955 802l35 2 40 10 45 8-10 4-60-5-45-8z', 'M983 740l20 2 15-18 25-25 12 12-8 28-8 42-30 5-18-8-8-20z', 'M1065 745l40-6-30 12-6 10 15 10 5 22-12-5-8 12-8-10z', 'M1085 825l30-4-25 14zM1118 820l40 2-10 6-30-2zM1118 735l5 22 4-6z', 'M1148 760l15-4 10 15 25-5 45 15 30 22 30 30-10 8-35-22-20 2-10 8-15-12-5-15-25-6-10-12z', 'M1275 800l30-10-12 12zM1310 795l15 14M1325 815l20 10M1350 822l24 8M1360 835l20 8', 'M1398 918l20 22-8-2z', 'M1498 895l10-4 8 8-10 12-10-6z'
  ];
  const eastSpecks = [
    'M1420 870l6 10M1425 890l8 18M1412 845l6 8M1412 290l10 3M1462 310l18 4M1500 318l14 2M165 420l8-4M178 420l14 2M22 516l8 0M38 518l14-6M104 232l8 4M140 250l10-6M94 158h4M553 648h12M1112 770l18 4M1128 785l20 5M1190 690h3M885 735l10 15M900 760l12 20M500 850l8 8M485 852l10 8',
    'M708 660l2 10M712 715l0 14M575 790l2 3M575 930l8 0M590 922l4 0M680 1162l10 5M1410 1180h5M1435 1192h3M540 1140h8M443 1144h4M712 1196h4M1356 1210h4M205 745h4M212 738h4M48 818h3M702 812h3M635 916h3M113 886h3M1200 672h3M1228 525h3M1370 692h3M1445 725h3',
    'M200 228l28-18 30-24 38-20 40-8M204 250l14 12M1145 485l8-12 20-10M1160 470l8-4M1200 460l14-14M1280 855l12-6M1060 815l14 6M1170 760l-8 6'
  ];
  const eastArcs = ['M1340 320q-12 14-24 26l-18 18-22 12-16 10M1252 580q12 40 0 60M1150 490l-18 30-30 20-14 6M862 622q-8 30 4 60M1465 725l8 24 12 14'];
  const eastBorders = [
    'M522 350q5-20 40-25l60 0 0-22 65-15 50 10 35 20 50 22 35-10 40 8 10-18 60 12 50 5 20 12 20-8-5-25 35-12 40 12 20 30 40 5-10 22-30 20M820 342l50 45 70 15 60-10 50-25 35-15M512 350l10 20M820 342l-20 20-30 10-5 25-30 10-20 20-25-10M580 375l20-2 45 15 60 8 55 0M580 375l0 30 30 0 40 35 15 0M580 430l40 15 5 55-8 8 10 30M620 490l50-25 30-30M690 525l30-45 20-5M560 435l20 5M755 490l30 25 45 15 60-15 15-5M760 500l30 20 35 10M825 535l0 35M830 545l25 10-10 15M895 520l-20 25-25 25M905 520l-10 30 25 20 25 10M900 580l20 0 20 25 0 25 30 5M925 570l30-10M925 570l30 30 15 30-15 30M930 640l10-5',
    'M390 165l0 45-5 40-15 20 5 25 30 25 25 10 30 10 0 20M300 170l35 20M335 158l5 25 0 20M245 250l5-35 40-40M320 290l45-10M320 265l45 5 10-5M340 300l-5 20 5 20M265 297l5 25 20 10 45 5M205 305l0 35 20 15M175 325l30 15M240 335l30-10 20 12-40 15-45 5M290 345l35 5M280 350l-5 15 30-5 35-10 35 0M300 362l15 20 20-2M320 385l50 0M315 395l5 20 25-5M146 390l50 5M105 395l0 45M205 368l20-5 30-5M260 365l15 15 20 5M335 320h60l5-20M345 350l25-5 15 20M468 395l30 10 20 12M495 405l10 35M425 445l65-8 15 20 20 25M430 480l30 0 35 30 25 0M430 490l15-10 15-25M482 605l30 5 60-15 20 25M555 600l0 10M545 545l40-8',
    'M118 460l30 0 0 25-30 20-25 15M95 520l90 70 90-35M115 545l0 75-70 5M240 445l-5 40-5 70 40 5M347 485v85h93M347 570l-8 15-70-30M339 585l-5 60-10 25-55 10-5-20 5-105M110 620l20 15 60-18v-25M135 665l25-25 25 30M135 658l0 50M160 660l5 45M175 655l5 45M185 640l80 0 5 45-25 35M32 640l30-5 15 25M60 675l15-10 20 25M98 680l0 35M40 650l20 0M330 670l70-5 10-25 30-5 20-12M340 680l40 30 80 5 50-35M410 640l0 45 15 30M245 720l60-12 45 0 35 5 5 50M300 712l-20 50-32 35M230 735l35 0 5 25-20 20M392 760l55 0 18 25M470 718l0 50M250 802l40-2 10 20 25 0 0 75h-78M325 855l30 8 25 0 25-30-20-18 0-50M325 895l35 10 55-30M318 905l-5 70 50-15 35-20-20-35M308 905l0 80-20 10M340 910l-20 0M400 845l65 0M415 845l0 40M365 1000l10-8 6 8-10 8zM390 975l8-8',
    'M1222 778v52M985 745l20-5 25 0 5-18 20 0'
  ];
  const lakes = ['M540 362l18 3 5 6-22 14 8 10-4 10 14 8 8 26-16 6-14-8-2-18-14-15-6-15 6-14z'];
  const disputedWest = ['M1043 695l12-12 12 8-5 12 6 15 8 12 5 8-18 2-10-18-2-15z', 'M967 905l8 0 6 20 8 15 4 11-28 0z', 'M811 600l4 2-2 16-4 0z', 'M1043 1183l25 2-10 5-12 0z', 'M1238 1203l14 7-8 0z', 'M1100 731l4 0 0 5-4 0z'];
  const disputedEast = ['M30 574l16-30 12-22 36-2 0 14-26 0 0 18-8 22z', 'M706 445l14-4 20 8 22 2-6 16 6 10-15 4-22 0-2-20-12-8z', 'M852 524l10-12 20-6 12 8-12 4-16 8z', 'M482 660l14 6 16-6 18 2-4 12-10 12-20-8-14-10z', 'M408 368l12 0 14 5-12 6-12-2z', 'M442 348l16-2-4 8-10 4z', 'M368 667h8v6h-8z', 'M504 414l8 2 2 8-6 0z', 'M462 387l14 5-2 2-12-3z', 'M374 350l8 10-4 0z', 'M406 457l10-2-8 6z', 'M422 474l5 8-2 8-4-4z', 'M634 365h6v5h-6z', 'M486 396h6v4h-6z', 'M1270 374l8-2M1114 432l14-2M418 710h6'];
</script>

{#snippet icon(name)}
  <svg class="ico" viewBox="0 0 16 16" fill="#555" aria-hidden="true">{@html icons[name]}</svg>
{/snippet}

{#snippet arrow()}
  <svg class="arr" viewBox="0 0 8 5" aria-hidden="true"><path d="M0 0h8L4 5z" /></svg>
{/snippet}

{#snippet hatch()}
  <svg class="hatch" aria-hidden="true">
    <defs>
      <pattern id="lines" width="3" height="3" patternUnits="userSpaceOnUse"><path d="M0 2h1v1H0zM1 1h1v1H1zM2 0h1v1H2z" fill="#e9707c" /></pattern>
    </defs>
    <rect width="100%" height="100%" fill="#f6d3d6" />
    <rect width="100%" height="100%" fill="url(#lines)" />
  </svg>
{/snippet}

{#snippet tool(t)}
  {#if t.kind === 'grip'}
    <span class="grip"></span>
  {:else if t.kind === 'sep'}
    <span class="sep"></span>
  {:else if t.kind === 'space'}
    <span class="space"></span>
  {:else if t.kind === 'more'}
    <button class="more" aria-label="More tools">
      <svg viewBox="0 0 9 7" aria-hidden="true"><path d="m1 0 3 3.500L1 7M5 0l3 3.500L5 7" /></svg>
    </button>
  {:else}
    <button class="tool" class:on={t.on} class:wide={t.menu} disabled={t.off} aria-label={t.name}>
      <span class="pic">{@render icon(t.name)}</span>
      {#if t.menu}{@render arrow()}{/if}
    </button>
  {/if}
{/snippet}

{#snippet dockHead(title)}
  <header class="dockhead">
    <h2>{title}</h2>
    <button aria-label="Float {title}"><svg viewBox="0 0 12 12"><rect x=".5" y=".5" width="11" height="11" rx="2" /><path d="M5 3h4v4H5zM3 5h4v4H3z" /></svg></button>
    <button aria-label="Close {title}"><svg viewBox="0 0 12 12"><rect x=".5" y=".5" width="11" height="11" rx="2" /><path class="x" d="m3.500 3.500 5 5m0-5-5 5" /></svg></button>
  </header>
{/snippet}

{#snippet combo(label, value, cls = '', pic = '', id = undefined)}
  <div class="combo {cls}">
    {#if pic === 'solid'}<svg class="solid" viewBox="0 0 32 2" preserveAspectRatio="none"><path d="M0 0h32v2H0z" /></svg>
    {:else if pic}{@render icon(pic)}{/if}
    <select {id} aria-label={id ? undefined : label}><option>{value}</option></select>
    {@render arrow()}
  </div>
{/snippet}

{#snippet spin(id, value, cls = '', clear = false)}
  <div class="spin {cls}">
    <input {id} type="text" {value} />
    {#if clear}<svg class="clear" viewBox="0 0 13 10"><path d="M4 0h9v10H4L0 5z" /><path class="x" d="m6 3 4 4m0-4-4 4" /></svg>{/if}
    <span class="steps">
      <button aria-label="Increase"><svg viewBox="0 0 8 5"><path d="M0 5h8L4 0z" /></svg></button>
      <button aria-label="Decrease"><svg viewBox="0 0 8 5"><path d="M0 0h8L4 5z" /></svg></button>
    </span>
  </div>
{/snippet}

{#snippet override()}
  <button class="override" aria-label="Data defined override">
    <svg viewBox="0 0 23 17"><path class="tri" d="M5 2 0 8.500 5 15z" /><path class="box" d="M5.500 .5h12v15h-12z" /><path class="l2" d="M8 4.500h7" /><path class="l" d="M6 8.500h11M8 12.500h7" /><path d="M16 12h7l-3.500 4z" /></svg>
  </button>
{/snippet}

<div class="app">
  <header class="title">
    <svg class="logo" viewBox="0 0 22 22" aria-hidden="true">
      <path d="M10 0a10.500 10.500 0 1 0 3.500 20.600L10.500 16.500A6.500 6.500 0 1 1 16 10l4.500 4A10.500 10.500 0 0 0 10 0z" fill="#6fa22c" />
      <path d="m10 10 3-1 8 9v4h-4z" fill="#5c9427" />
      <path d="m8.500 7 5.500 1.500-1 1.500 3 3-2.500 2.500-3-3-1.500 1z" fill="#f0913a" />
    </svg>
    <h1>countries-disputed — QGIS</h1>
    <div class="winbtns">
      <button aria-label="Minimize"><svg viewBox="0 0 12 12"><path d="M2 10h8" /></svg></button>
      <button aria-label="Maximize"><svg viewBox="0 0 12 12"><path d="M3.500 3.500h5v5h-5z" /></svg></button>
      <button aria-label="Close"><svg viewBox="0 0 12 12"><path d="m2 2 8 8m0-8-8 8" /></svg></button>
    </div>
  </header>

  <nav class="menu">
    {#each menus as [a, u, b]}<a href="#menu">{a}<u>{u}</u>{b}</a>{/each}
  </nav>

  {#each toolbars as bar}
    <div class="toolbar">
      {#each bar as t}{@render tool(t)}{/each}
    </div>
  {/each}

  <main>
    <section class="layers">
      {@render dockHead('Layers')}
      <div class="ltools">
        {#each layerTools as t}{@render tool(t)}{/each}
      </div>
      <ul class="list">
        {#each layers as l}
          <li class:selected={l.selected}>
            <label>
              <input type="checkbox" bind:checked={l.on} />
              <span class="swatch"></span>
              <span class="lname">{l.name}</span>
            </label>
          </li>
        {/each}
      </ul>
    </section>

    <section class="canvas">
      <svg viewBox="392 142 1051 878" role="img" aria-label="World map with disputed areas">
        <defs>
          <pattern id="hatch" width="6" height="6" patternUnits="userSpaceOnUse" patternTransform="rotate(45)">
            <path d="M0 0h3v6H0z" fill="#dd4352" />
          </pattern>
          <filter id="coast" x="-2%" y="-2%" width="104%" height="104%">
            <feTurbulence type="fractalNoise" baseFrequency="0.09" numOctaves="3" seed="4" />
            <feDisplacementMap in="SourceGraphic" scale="14" xChannelSelector="R" yChannelSelector="G" />
          </filter>
        </defs>
        <g class="land" transform="translate(400 320) scale(.33333)">
          <g filter="url(#coast)">
            {#each west as d}<path {d} />{/each}
            {#each westSpecks as d}<path class="speck" {d} />{/each}
          </g>
          {#each westBorders as d}<path class="border" {d} />{/each}
        </g>
        <g class="land" transform="translate(860 320) scale(.36991 .33333)">
          <g filter="url(#coast)">
            {#each east as d}<path {d} />{/each}
            {#each lakes as d}<path class="lake" {d} />{/each}
            {#each eastSpecks as d}<path class="speck" {d} />{/each}
          </g>
          {#each eastArcs as d}<path class="speck arc" {d} />{/each}
          {#each eastBorders as d}<path class="border" {d} />{/each}
        </g>
        <g class="land" transform="translate(405 735) scale(.33333)">
          <path d="M1515 263H31v-49l129 2 75 5-70-14 50-3 47-6-32-11 70-2 5-7-90-18 0-8 75 3 30-13 70-7 30-4 30 2 50-3 60 3 60 3 90 2-30-18 80 2 70 0 40 6 30-6 30 1 35-3 10-15-5-25 20-15 40-15 45-14-45 16-30 16-10 10 25 7 15 25-5 20-25 12-110 8 35 8-75 4 55 23 55 3 40 4 35 15 45-9 75-3 10 3 30-11 85-7-45-8 25-17 60-10 65-5 25-18 40-17 50-2 15-3" />
          <path d="M1085 184l30-5 5-15 25-7 30 10 5 10-25 7z" />
          <path d="M938 175l25-8 30 12 45 0-5 7-25-2-25-8z" />
          <path d="M905 102l30-4 0-10 20-2 15 15-12 15-30-2 15-8z" />
          <path d="M165 172l30-3 10 6-30 0zM80 202l50 4 45 4-10 4zM685 112l30-2 22 3-30 3zM472 124l24 4-8 2z" />
          <path class="speck" d="M510 126l20 1M540 129l20 0M575 130l18 2M1010 38l40-12M1075 20h10M1155 15h14M1360 128h8M170 190h22M770 118h25M290 150l30-2M1000 60l25-8M1022 90l10 20M1285 180l6-4" />
        </g>
        <g class="land" transform="translate(910 735) scale(.33333)">
          <path d="M0 100l25 7 35-7 90-3 50 3 50 2 50-9 10-8 40 10 20-13 60-12 30-10 30 0 30 10 92 7-12 18-15 27 20-12 25-15 30-3 30-12 50-12 90-2 50-6 65 8 25-8 30 10 60 0 50-2 10-6 60 3 50 5 30 10 60 5 40 7 20 8 50 0 27 8-27 14-45 16 5 17 15 7 25-4 10 0-20 6-40 3 0 20 55 13 100 8V263H0" />
          <path class="speck" d="M1386 64h5M1404 72h4M800 60h4M885 55h6M35 97h14M60 97h12M205 97h10M430 70h14M1350 180l20 4" />
        </g>
        <g class="disputed" transform="translate(400 320) scale(.33333)">
          {#each disputedWest as d}<path {d} />{/each}
        </g>
        <g class="disputed" transform="translate(860 320) scale(.36991 .33333)">
          {#each disputedEast as d}<path {d} />{/each}
        </g>
        <text class="note" x="516" y="246">map canvas</text>
      </svg>
    </section>

    <section class="styling">
      {@render dockHead('Layer Styling')}
      <div class="dockbody">
        {@render combo('Layer', 'ne_10m_admin_0_disputed_areas', '', 'poly')}
        <div class="cols">
          <div class="side">
            <button class="cur" aria-label="Symbology">{@render icon('brush')}</button>
            {#each sideTabs as s}<button aria-label={s}>{@render icon(s)}</button>{/each}
          </div>
          <div class="pane">
            {@render combo('Renderer', 'Single symbol', '', 'single')}
            <div class="symrow">
              <div class="preview">{@render hatch()}</div>
              <ul class="tree">
                {#each symbolTree as n}
                  <li class="d{n.depth}" class:selected={n.selected} class:bold={n.bold}>
                    {#if !n.selected}{@render arrow()}{/if}
                    {#if n.swatch === 'hatch'}{@render hatch()}{:else}<span class="dash"></span>{/if}
                    {n.name}
                  </li>
                {/each}
              </ul>
              <div class="symbtns">
                <button aria-label="Add symbol layer">{@render icon('green')}</button>
                <button aria-label="Move up" disabled>{@render icon('up')}</button>
                <button aria-label="Remove symbol layer" disabled>{@render icon('minus')}</button>
                <button aria-label="Move down" disabled>{@render icon('down')}</button>
                <button aria-label="Duplicate">{@render icon('dup')}</button>
                <button aria-label="Lock color">{@render icon('unlock')}</button>
              </div>
            </div>
            <hr />
            <div class="type"><label for="slt">Symbol layer type</label>{@render combo('', 'Simple line', '', '', 'slt')}</div>

            <div class="form">
              <div class="row tall">
                <label for="color">Color</label>
                <div class="colorbtn">
                  <button id="color" aria-label="Color"><span></span></button>
                  <button class="cdd" aria-label="Color menu">{@render arrow()}</button>
                </div>
                {@render override()}
              </div>
              <div class="row">
                <label for="sw">Stroke width</label>
                {@render spin('sw', '0.260000', '', true)}
                {@render combo('Stroke width unit', 'Millimeters', 'unit')}
                {@render override()}
              </div>
              <div class="row">
                <label for="off">Offset</label>
                {@render spin('off', '0.000000')}
                {@render combo('Offset unit', 'Millimeters', 'unit')}
                {@render override()}
              </div>
              <div class="row">
                <label for="ss">Stroke style</label>
                {@render combo('', 'Solid Line', '', 'solid', 'ss')}
                {@render override()}
              </div>
              <div class="row">
                <label for="js">Join style</label>
                {@render combo('', 'Bevel', '', 'bevel', 'js')}
                {@render override()}
              </div>
              <div class="row">
                <label for="cs">Cap style</label>
                {@render combo('', 'Square', '', 'square', 'cs')}
                {@render override()}
              </div>
              <label class="chk"><input type="checkbox" />Use custom dash pattern</label>
              <div class="row dashrow">
                <button class="dashbtn" disabled aria-label="Dash pattern">
                  <svg viewBox="0 0 204 1" preserveAspectRatio="none"><path d="M0 .5h204" /></svg>
                </button>
                {@render combo('Dash unit', 'Millimeters', 'unit')}
                {@render override()}
              </div>
              <label class="chk"><input type="checkbox" />Draw line only inside polygon</label>
              <div class="row rings">
                <label for="rg">Rings</label>
                {@render combo('', 'All Rings', '', 'rings', 'rg')}
              </div>
            </div>

            <div class="foot1">
              <label class="chk en"><input type="checkbox" checked />Enable symbol layer</label>
              {@render override()}
              <label class="chk"><input type="checkbox" />Draw effects</label>
              <button class="sq" disabled aria-label="Effects">{@render icon('star')}</button>
            </div>
            <details class="render">
              <summary><svg viewBox="0 0 8 12"><path d="M0 0l8 6-8 6z" /></svg>Layer Rendering</summary>
            </details>
            <div class="foot2">
              <button class="sq" aria-label="Undo">{@render icon('undoC')}</button>
              <button class="sq" aria-label="Redo">{@render icon('redoC')}</button>
              <label class="chk live"><input type="checkbox" checked />Live update</label>
              <button class="apply">{@render icon('check')}Apply</button>
            </div>
          </div>
        </div>
      </div>
      <div class="tabs" role="tablist">
        {#each dockTabs as t, i}
          <button role="tab" aria-selected={i === 1} class:cur={i === 1}>{t}</button>
        {/each}
      </div>
    </section>
  </main>

  <footer class="status">
    <div class="locate">
      {@render icon('search')}
      <input type="text" placeholder="Type to locate (Ctrl+K)" aria-label="Locator" />
    </div>
    <label for="coord">Coordinate</label>
    <input id="coord" class="coord" type="text" value="-176.3,117.0" />
    <button class="plain" aria-label="Toggle extents">{@render icon('extents')}</button>
    <label for="scale">Scale</label>
    {@render combo('', '1:143878416', 'scale', '', 'scale')}
    <button class="plain lock" aria-label="Lock scale">{@render icon('lock')}</button>
    <label for="mag">Magnifier</label>
    {@render spin('mag', '100%', 'mag')}
    <label for="rot">Rotation</label>
    {@render spin('rot', '0.0 °', 'rot')}
    <label class="chk render2"><input type="checkbox" checked />Render</label>
    <button class="plain crs">{@render icon('crs')}EPSG:4326</button>
    <button class="plain msg" aria-label="Messages">{@render icon('bubble')}</button>
    <button class="plain" aria-label="Plugins">{@render icon('puzzle')}</button>
  </footer>
</div>

<style>
  :global(body) { margin: 0; background: #efefef; }
  .app, .app * { box-sizing: border-box; }
  .app {
    min-height: 100vh;
    display: flex;
    flex-direction: column;
    background: #efefef;
    color: #1b1b1b;
    font-family: 'Noto Sans', sans-serif;
    font-size: 12px;
    line-height: 19px;
  }
  button, input, select { font: inherit; color: inherit; margin: 0; padding: 0; border: 0; background: none; border-radius: 0; outline: 0; }
  h1, h2, ul { margin: 0; padding: 0; list-style: none; font-size: 12px; }
  svg { display: block; flex: none; }
  .ico { width: 16px; height: 16px; overflow: visible; }
  .arr { width: 8px; height: 5px; fill: #555; }

  .title { height: 23px; display: flex; align-items: center; background: #c6c6c6; padding-right: 6px; }
  .logo { width: 22px; height: 22px; }
  .title h1 { flex: 1; text-align: center; color: #444; font-weight: 700; text-shadow: 0 1px 0 #eee; }
  .winbtns { display: flex; gap: 10px; }
  .winbtns svg { width: 12px; height: 12px; fill: none; stroke: #333; stroke-width: 2; }

  .menu { height: 22px; display: flex; gap: 15px; padding: 1px 11px 0 10px; border-bottom: 1px solid #d0d0d0; }
  .menu a { color: inherit; text-decoration: none; }
  .menu u { text-underline-offset: 3px; }

  .toolbar { height: 31px; display: flex; align-items: center; background: linear-gradient(#f9f9f9, #eee); border-bottom: 1px solid #b0b0b0; overflow: hidden; }
  .toolbar:last-of-type { height: 29px; }
  .grip { flex: none; width: 16px; height: 17px; padding: 0 3px 0 8px; background: radial-gradient(circle at 1px 1px, #aaa 0 1px, transparent 1px) content-box 0 0 / 3px 3px; }
  .grip:first-child { width: 12px; padding: 0 3px 0 4px; }
  .sep { flex: none; width: 7px; height: 12px; background: linear-gradient(#ccc, #ccc) center / 1px 100% no-repeat; }
  .space { flex: none; width: 8px; }
  .tool { flex: none; width: 25px; height: 23px; display: flex; align-items: center; border: 1px solid transparent; border-radius: 3px; }
  .tool.wide { width: 37px; }
  .tool.on { background: #dcdcdc; border-color: #a5a5a5; }
  .tool:disabled { opacity: .4; filter: grayscale(.8); }
  .pic { width: 23px; display: flex; justify-content: center; }
  .tool .arr { margin-left: 2px; }
  .more { flex: none; width: 15px; height: 23px; display: grid; place-items: center end; padding-right: 1px; }
  .more svg { width: 9px; height: 7px; fill: none; stroke: #444; stroke-width: 1.300; }

  main { flex: 1; display: grid; grid-template-columns: 386px minmax(0, 1fr) 471px; }

  .dockhead { display: flex; align-items: center; gap: 2px; height: 24px; padding: 0 2px 1px 4px; }
  .dockhead h2 { flex: 1; font-weight: 400; }
  .dockhead svg { width: 12px; height: 12px; fill: none; stroke: #666; }
  .dockhead .x { stroke-width: 2; stroke: #444; }

  .layers { display: flex; flex-direction: column; padding-right: 4px; }
  .ltools { display: flex; align-items: center; height: 29px; padding: 0 0 4px 3px; }
  .list { flex: 1; margin-bottom: 3px; background: #fff; border: 1px solid #b5b5b5; }
  .list li { height: 19px; font-weight: 700; color: #000; }
  .list label { display: flex; align-items: center; height: 19px; padding-left: 23px; }
  .swatch { width: 16px; height: 16px; margin: 0 6px; background: #d7d7d7; }
  .selected .swatch { background: repeating-linear-gradient(135deg, #5a6ba3 0 1px, #4e74ad 1px 2px); }
  .selected { background: #308cc6; color: #fff; }
  .list .selected { color: #fff; }
  .selected .lname { text-decoration: underline; text-underline-offset: 3px; }

  input[type='checkbox'] { appearance: none; flex: none; width: 14px; height: 14px; background: #fff; border: 1px solid #b0b0b0; display: grid; place-items: center; }
  input[type='checkbox']:checked::before { content: ''; width: 9px; height: 9px; background: #000; clip-path: polygon(0 45%, 20% 40%, 38% 65%, 75% 0, 100% 0, 45% 100%, 30% 100%); }
  .chk { display: flex; align-items: center; gap: 5px; }

  .canvas { background: #fff; border: 6px solid #f00; border-radius: 4px; min-width: 0; position: relative; }
  .canvas svg { position: absolute; inset: 0; width: 100%; height: 100%; }
  .land path { fill: #d7d7d7; stroke: #b5b5b5; stroke-width: 2; stroke-linejoin: round; }
  .land .border { fill: none; stroke: #b4b4b4; }
  .land .lake { fill: #fff; }
  .land .speck { fill: none; stroke: #a8a8a8; stroke-width: 3; stroke-dasharray: 5 3 3 4; }
  .land .arc { stroke-width: 2; stroke-dasharray: 3 6; }
  .disputed path { fill: url(#hatch); stroke: #dd5562; stroke-width: 1; stroke-dasharray: 4 4; }
  .note { font-size: 37px; fill: #f00; }

  .styling { display: flex; flex-direction: column; }
  .styling .dockhead { padding-left: 7px; }
  .dockbody { flex: 1; display: flex; flex-direction: column; padding: 0 3px 4px 6px; }
  .combo { position: relative; display: flex; align-items: center; gap: 4px; height: 25px; min-width: 0; padding: 0 7px 0 4px; border: 1px solid #b0b0b0; border-radius: 3px; background: linear-gradient(#fdfdfd, #ececec); }
  .combo select { flex: 1; min-width: 0; height: 19px; appearance: none; }
  .combo .arr { pointer-events: none; }
  .solid { width: 32px; height: 2px; margin-left: 1px; fill: #000; }

  .cols { flex: 1; display: flex; gap: 3px; padding-top: 6px; }
  .side { width: 38px; background: #5d5d5d; }
  .side button { display: flex; align-items: center; width: 38px; height: 24px; padding-left: 4px; }
  .side .ico { width: 14px; height: 14px; }
  .side .cur { background: #efefef; padding-left: 7px; }
  .pane { flex: 1; min-width: 0; display: flex; flex-direction: column; }

  .symrow { display: flex; padding-top: 6px; height: 142px; }
  .preview { flex: 1; display: grid; place-items: center; padding: 0 6px 5px 0; }
  .hatch { width: 16px; height: 16px; }
  .preview :global(.hatch) { width: 61px; height: 61px; }
  .dash { width: 16px; height: 2px; background: #ed8d95; }
  .selected .dash { background: #765e94; }
  .tree { width: 247px; height: 119px; margin: 5px 6px 0 0; background: #fff; border: 1px solid #b5b5b5; }
  .tree li { display: flex; align-items: center; gap: 6px; height: 19px; padding-left: 6px; }
  .tree .arr { margin-right: 3px; }
  .tree .d1 { padding-left: 26px; }
  .tree .d2 { padding-left: 46px; }
  .tree .d3 { padding-left: 83px; }
  .bold { font-weight: 700; color: #000; }
  .symbtns { display: grid; grid-template-columns: 28px 28px; grid-auto-rows: 24px; gap: 4px 6px; align-content: start; }
  .symbtns button, .sq, .apply, .colorbtn button, .dashbtn { display: grid; place-items: center; border: 1px solid #b5b5b5; border-radius: 3px; background: linear-gradient(#fdfdfd, #ececec); }
  .symbtns button:disabled, .sq:disabled { border-color: #ccc; }
  .symbtns button:disabled .ico { opacity: .6; }
  .symbtns .ico { width: 15px; height: 15px; }
  hr { width: 100%; margin: 0 0 9px; border: 0; border-top: 1px solid #a0a0a0; }
  .type { display: flex; align-items: center; gap: 1px; padding: 0 10px 0 1px; }
  .type label { flex: none; width: 100px; white-space: nowrap; }
  .type .combo { flex: 1; }

  .form { flex: 1; padding: 12px 23px 0 10px; }
  .row { display: flex; align-items: center; gap: 6px; margin-bottom: 7px; }
  .row > label { flex: none; width: 77px; }
  .row .combo { flex: 1; }
  .row .combo.unit { flex: none; width: 116px; }
  .row .spin, .dashbtn { flex: 1; }
  .override { flex: none; margin-left: 3px; }
  .override svg { width: 23px; height: 17px; fill: #555; }
  .override .tri { fill: #888; }
  .override .box { fill: #fafafa; stroke: #777; stroke-width: 1; }
  .override .l { stroke: #666; stroke-width: 1; }
  .override .l2 { stroke: #444; stroke-width: 2; }
  .colorbtn { flex: 1; display: flex; gap: 1px; }
  .colorbtn button { height: 28px; flex: 1; padding: 5px 4px; }
  .colorbtn span { width: 100%; height: 16px; border-radius: 3px; background: #e6152c; }
  .colorbtn .cdd { flex: none; width: 12px; padding: 0; }

  .spin { display: flex; align-items: center; height: 24px; min-width: 0; background: #fff; border: 1px solid #b0b0b0; border-radius: 3px; }
  .spin input { flex: 1; width: 0; min-width: 0; padding-left: 4px; }
  .clear { width: 13px; height: 10px; margin-right: 11px; fill: #999; }
  .clear .x { stroke: #fff; }
  .steps { align-self: stretch; width: 15px; display: flex; flex-direction: column; justify-content: space-evenly; align-items: center; border-left: 1px solid #b0b0b0; background: #f5f5f5; border-radius: 0 3px 3px 0; }
  .steps svg { width: 7px; height: 4px; fill: #555; }
  .steps button { display: block; }
  .form > .chk { height: 19px; margin-top: 8px; }
  .dashrow { margin: 8px 0 0; padding-left: 18px; }
  .dashbtn { height: 25px; border-color: #ccc; padding: 0 4px; }
  .dashbtn svg { width: 100%; height: 1px; stroke: #999; stroke-dasharray: 19 7; }
  .form .rings { margin: 9px 0 0; padding-right: 0; }
  .rings .combo { margin-right: -4px; }

  .foot1 { display: flex; align-items: center; height: 24px; padding-left: 1px; }
  .foot1 .override { margin: 0 40px 0 15px; }
  .foot1 .sq { margin-left: 13px; }
  .sq { width: 24px; height: 23px; }
  .sq .ico { width: 14px; height: 14px; }
  .render summary { display: flex; align-items: center; gap: 10px; height: 67px; padding: 17px 0 16px 4px; margin-bottom: -19px; list-style: none; font-weight: 700; color: #000; }
  .render svg { width: 8px; height: 12px; fill: #333; }
  .foot2 { display: flex; align-items: center; gap: 6px; }
  .live { margin-left: auto; }
  .apply { width: 80px; height: 25px; display: flex; align-items: center; justify-content: center; gap: 1px; margin-left: 7px; }

  .tabs { display: flex; align-items: flex-start; height: 31px; padding-left: 3px; background: linear-gradient(#b5b5b5, #b5b5b5) 0 0 / 100% 1px no-repeat; }
  .tabs button { height: 25px; padding: 0 11px; background: #dedede; border: 1px solid #b5b5b5; border-radius: 0 0 3px 3px; }
  .tabs .cur { height: 27px; background: #f7f7f7; border-top-color: #f7f7f7; }

  .status { display: flex; align-items: center; height: 28px; padding: 0 6px 3px 4px; font-size: 9px; }
  .locate { display: flex; align-items: center; gap: 8px; width: 221px; height: 25px; margin-right: auto; padding-left: 8px; background: #fff; border: 1px solid #b0b0b0; border-radius: 3px; font-size: 12px; }
  .locate .ico { width: 13px; height: 13px; }
  .locate input { flex: 1; min-width: 0; }
  .locate input::placeholder { color: #888; opacity: 1; }
  .coord { width: 65px; height: 22px; margin: 0 5px 0 4px; text-align: center; background: #fff; border: 1px solid #b0b0b0; border-radius: 3px; }
  .plain { display: flex; align-items: center; gap: 5px; }
  .plain .ico { width: 14px; height: 14px; }
  .status .plain + label { margin-left: 13px; }
  .status .lock + label { margin-left: 8px; }
  .status .scale { width: 88px; height: 23px; gap: 6px; margin-left: 4px; background: #fff; padding-right: 6px; }
  .status .scale select { height: 21px; border-right: 1px solid #b0b0b0; }
  .lock { margin-left: 11px; }
  .status .spin { height: 23px; }
  .mag { width: 90px; margin: 0 9px 0 4px; }
  .rot { width: 86px; margin-left: 10px; }
  .render2 { margin-left: 5px; }
  .crs { margin-left: 17px; }
  .msg { margin: 0 15px 0 20px; }
  .msg .ico, .msg + .plain .ico { width: 16px; height: 16px; }
</style>
